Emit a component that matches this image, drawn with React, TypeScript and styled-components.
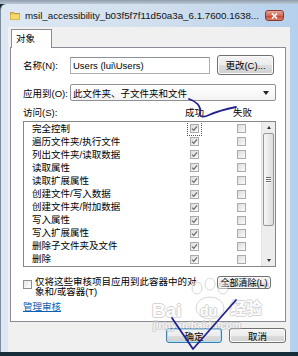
import styled, { createGlobalStyle } from "styled-components";

const GlobalStyle = createGlobalStyle`
  html, body {
    margin: 0;
    padding: 0;
    background: #172c39;
    overflow: hidden;
  }
  #root {
    width: 298px;
    height: 356px;
  }
`;

const Screen = styled.div`
  position: relative;
  width: 298px;
  height: 356px;
  display: flex;
  flex-direction: column;
  font-family: "Liberation Sans", "Noto Sans CJK SC", sans-serif;
  font-size: 9.5px;
  color: #000;
`;

const Backdrop = styled.div`
  height: 4px;
  background: linear-gradient(#8e9cab, #bcc8d4);
`;

const Window = styled.div`
  height: 348px;
  box-sizing: border-box;
  display: flex;
  flex-direction: column;
  background: linear-gradient(90deg, #dde8f3 0%, #d0deed 55%, #b4d0ec 100%);
  border-left: 1px solid #7d8c9c;
  border-top-left-radius: 6px;
`;

const TitleBar = styled.div`
  height: 23px;
  display: flex;
  align-items: center;
  gap: 5px;
  padding: 0 14px 0 9px;
`;

const TitleText = styled.span`
  flex: 1;
  min-width: 0;
  white-space: nowrap;
  overflow: hidden;
  font-family: "Liberation Sans", sans-serif;
  font-size: 9.75px;
  color: #111;
`;

const CloseButton = styled.div`
  width: 19px;
  height: 11px;
  box-sizing: border-box;
  display: flex;
  align-items: center;
  justify-content: center;
  border: 1px solid #8a3a30;
  border-radius: 3px;
  background: linear-gradient(#e7a497 0%, #d46a58 50%, #c2452f 55%, #d9826d 100%);
`;

const Client = styled.div`
  flex: 1;
  display: flex;
  flex-direction: column;
  margin: 0 8px 0 7px;
  padding: 2px 4px 0 2px;
  background: #f0f0f0;
`;

const TabStrip = styled.div`
  display: flex;
  padding-left: 1px;
`;

const Tab = styled.div`
  position: relative;
  z-index: 1;
  width: 41px;
  height: 19px;
  box-sizing: border-box;
  margin-bottom: -1px;
  padding: 2px 0 0 4px;
  border: 1px solid #898c95;
  border-bottom: none;
  background: #fff;
  line-height: 14px;
`;

const Panel = styled.div`
  height: 275px;
  box-sizing: border-box;
  display: flex;
  flex-direction: column;
  padding: 7px 9px 0 12px;
  border: 1px solid #898c95;
  background: #fff;
`;

const FieldRow = styled.div<{ $top?: number }>`
  display: flex;
  align-items: center;
  margin-top: ${({ $top }) => $top ?? 0}px;
`;

const Label = styled.span`
  width: 47px;
  flex-shrink: 0;
  white-space: nowrap;
`;

const TextField = styled.div`
  width: 140px;
  height: 17px;
  box-sizing: border-box;
  padding-left: 2px;
  border: 1px solid #a9acb3;
  border-top-color: #8c9099;
  line-height: 15px;
  white-space: nowrap;
`;

const ButtonSlot = styled.div<{ $left?: number; $right?: number }>`
  margin-left: ${({ $left }) => ($left === undefined ? "auto" : `${$left}px`)};
  margin-right: ${({ $right }) => $right ?? 0}px;
`;

const PushButton = styled.div<{ $w: number; $h: number; $default?: boolean; $small?: boolean }>`
  width: ${({ $w }) => $w}px;
  height: ${({ $h }) => $h}px;
  box-sizing: border-box;
  display: flex;
  align-items: center;
  justify-content: center;
  white-space: nowrap;
  font-size: ${({ $small }) => ($small ? "9px" : "9.5px")};
  border: 1px solid ${({ $default }) => ($default ? "#3c7fb1" : "#707070")};
  border-radius: 3px;
  background: linear-gradient(#f3f3f3 0%, #ececec 50%, #dddddd 51%, #d0d0d0 100%);
  box-shadow: inset 0 0 0 1px ${({ $default }) => ($default ? "#aee0f7" : "#fbfbfb")};
`;

const Combo = styled.div`
  flex: 1;
  height: 17px;
  box-sizing: border-box;
  display: flex;
  align-items: center;
  padding: 0 6px 0 2px;
  border: 1px solid #8e9096;
  border-radius: 2px;
  background: linear-gradient(#ffffff, #f3f3f3);
`;

const ComboText = styled.span`
  flex: 1;
  white-space: nowrap;
`;

const DownTriangle = styled.span`
  width: 0;
  height: 0;
  border-left: 3px solid transparent;
  border-right: 3px solid transparent;
  border-top: 4px solid #222;
`;

const HeaderRow = styled.div`
  display: grid;
  grid-template-columns: 162px 48px 1fr;
  height: 12px;
  margin-top: 6px;
  line-height: 12px;
`;

const ListBox = styled.div`
  height: 146px;
  box-sizing: border-box;
  display: flex;
  margin-top: 2px;
  border: 1px solid #828790;
  background: #fff;
`;

const Rows = styled.div`
  flex: 1;
  overflow: hidden;
`;

const Row = styled.div`
  height: 13.1px;
  display: grid;
  grid-template-columns: 158px 47px 1fr;
  align-items: center;
  padding-left: 8px;
  line-height: 12px;
`;

const Check = styled.span<{ $focus?: boolean }>`
  width: 9px;
  height: 9px;
  box-sizing: border-box;
  display: flex;
  align-items: center;
  justify-content: center;
  border: 1px solid #ababab;
  background: linear-gradient(135deg, #dcdcdc, #fbfbfb);
  outline: ${({ $focus }) => ($focus ? "1px dotted #555" : "none")};
  outline-offset: 2px;
`;

const ScrollBar = styled.div`
  width: 13px;
  display: flex;
  flex-direction: column;
  background: #ededed;
  border-left: 1px solid #e2e2e2;
`;

const ScrollArrow = styled.div`
  height: 11px;
  display: flex;
  align-items: center;
  justify-content: center;
`;

const ArrowGlyph = styled.span<{ $up?: boolean }>`
  width: 0;
  height: 0;
  border-left: 2.5px solid transparent;
  border-right: 2.5px solid transparent;
  ${({ $up }) => ($up ? "border-bottom: 3px solid #333;" : "border-top: 3px solid #333;")}
`;

const Thumb = styled.div`
  height: 93px;
  box-sizing: border-box;
  margin: 0 1px;
  display: flex;
  flex-direction: column;
  align-items: center;
  justify-content: center;
  gap: 1px;
  border: 1px solid #979797;
  border-radius: 2px;
  background: linear-gradient(90deg, #f6f6f6, #dcdcdc);
`;

const Grip = styled.span`
  width: 5px;
  height: 1px;
  background: #6b6b6b;
  box-shadow: 0 1px 0 #fff;
`;

const Track = styled.div`
  flex: 1;
`;

const OptionRow = styled.div`
  display: flex;
  align-items: flex-start;
  margin-top: 9px;
`;

const OptionText = styled.div`
  width: 168px;
  margin: 1px 0 0 3px;
  line-height: 10px;
`;

const OptionCheck = styled(Check)`
  margin-top: 4px;
  flex-shrink: 0;
  border-color: #8f8f8f;
  background: linear-gradient(135deg, #e6e6e6, #ffffff);
`;

const Link = styled.span`
  margin-top: 5px;
  align-self: flex-start;
  line-height: 10px;
  color: #0a5fb5;
  text-decoration: underline;
`;

const ButtonRow = styled.div`
  display: flex;
  justify-content: flex-end;
  gap: 7px;
  margin-top: 6px;
`;

const BottomBand = styled.div`
  height: 4px;
  background: #172c39;
`;

const Watermark = styled.div`
  position: absolute;
  left: 150px;
  top: 278px;
  width: 120px;
  height: 54px;
  opacity: 0.45;
  pointer-events: none;
`;

const MarkWord = styled.span<{ $size: number }>`
  position: absolute;
  font-family: "Liberation Sans", "Noto Sans CJK SC", sans-serif;
  font-weight: bold;
  font-size: ${({ $size }) => $size}px;
  line-height: 1;
  color: #fff;
  text-shadow: -1px 0 #a0a0a0, 1px 0 #a0a0a0, 0 -1px #a0a0a0, 0 1px #a0a0a0;
  white-space: nowrap;
`;

const Scribble = styled.svg`
  position: absolute;
  left: 0;
  top: 0;
  pointer-events: none;
`;

const rows = [
  "完全控制",
  "遍历文件夹/执行文件",
  "列出文件夹/读取数据",
  "读取属性",
  "读取扩展属性",
  "创建文件/写入数据",
  "创建文件夹/附加数据",
  "写入属性",
  "写入扩展属性",
  "删除子文件夹及文件",
  "删除",
];

function Tick() {
  return (
    <svg width="7" height="7" viewBox="0 0 7 7">
      <path d="M1 3.6 L2.8 5.4 L6 1.4" fill="none" stroke="#6a6a6a" strokeWidth="1.3" />
    </svg>
  );
}

function FolderIcon() {
  return (
    <svg width="10" height="9" viewBox="0 0 10 9">
      <path d="M0.5 1.5 h3 l1 1 h5 v6 h-9 z" fill="#e8c24a" stroke="#b08a20" strokeWidth="0.8" />
      <path d="M0.5 3.5 h9 v5 h-9 z" fill="#f6d96b" />
    </svg>
  );
}

export default function App() {
  return (
    <Screen>
      <GlobalStyle />
      <Backdrop />
      <Window>
        <TitleBar>
          <FolderIcon />
          <TitleText>msil_accessibility_b03f5f7f11d50a3a_6.1.7600.1638...</TitleText>
          <CloseButton>
            <svg width="7" height="6" viewBox="0 0 7 6">
              <path d="M1 0.5 L6 5.5 M6 0.5 L1 5.5" stroke="#fff" strokeWidth="1.6" />
            </svg>
          </CloseButton>
        </TitleBar>
        <Client>
          <TabStrip>
            <Tab>对象</Tab>
          </TabStrip>
          <Panel>
            <FieldRow>
              <Label>名称(N):</Label>
              <TextField>Users (lui\Users)</TextField>
              <ButtonSlot $left={7}>
                <PushButton $w={57} $h={20}>更改(C)...</PushButton>
              </ButtonSlot>
            </FieldRow>
            <FieldRow $top={9}>
              <Label>应用到(O):</Label>
              <Combo>
                <ComboText>此文件夹、子文件夹和文件</ComboText>
                <DownTriangle />
              </Combo>
            </FieldRow>
            <HeaderRow>
              <span>访问(S):</span>
              <span>成功</span>
              <span>失败</span>
            </HeaderRow>
            <ListBox>
              <Rows>
                {rows.map((name, i) => (
                  <Row key={name}>
                    <span>{name}</span>
                    <Check $focus={i === 0}>
                      <Tick />
                    </Check>
                    <Check />
                  </Row>
                ))}
              </Rows>
              <ScrollBar>
                <ScrollArrow>
                  <ArrowGlyph $up />
                </ScrollArrow>
                <Thumb>
                  <Grip />
                  <Grip />
                  <Grip />
                </Thumb>
                <Track />
                <ScrollArrow>
                  <ArrowGlyph />
                </ScrollArrow>
              </ScrollBar>
            </ListBox>
            <OptionRow>
              <OptionCheck />
              <OptionText>仅将这些审核项目应用到此容器中的对象和/或容器(T)</OptionText>
              <ButtonSlot $right={5}>
                <PushButton $w={54} $h={13} $small>全部清除(L)</PushButton>
              </ButtonSlot>
            </OptionRow>
            <Link>管理审核</Link>
          </Panel>
          <ButtonRow>
            <PushButton $w={56} $h={15} $default>确定</PushButton>
            <PushButton $w={57} $h={15}>取消</PushButton>
          </ButtonRow>
        </Client>
      </Window>
      <BottomBand />
      <Watermark>
        <svg width="120" height="54" viewBox="0 0 120 54" style={{ position: "absolute", left: 0, top: 0 }}>
          <g fill="#fff" stroke="#a8a8a8" strokeWidth="1">
            <ellipse cx="47" cy="10" rx="5" ry="6" />
            <ellipse cx="60" cy="6" rx="5" ry="6" />
            <ellipse cx="73" cy="10" rx="5" ry="6" />
            <ellipse cx="60" cy="30" rx="14" ry="11" />
          </g>
        </svg>
        <MarkWord $size={19} style={{ left: 2, top: 23 }}>Bai</MarkWord>
        <MarkWord $size={14} style={{ left: 50, top: 26 }}>du</MarkWord>
        <MarkWord $size={16} style={{ left: 80, top: 23 }}>经验</MarkWord>
        <MarkWord $size={10} style={{ left: 3, top: 43 }}>jingyan.baidu.com</MarkWord>
      </Watermark>
      <Scribble width="298" height="356" viewBox="0 0 298 356">
        <g fill="none" stroke="#23238f" strokeWidth="1.8" strokeLinecap="round" strokeLinejoin="round">
          <path d="M189 99 C196 101 201 106 200 112 C199 117 203 118 209 115 C218 111 226 109 236 107" />
          <path d="M172 318 L193 349 L236 300" />
        </g>
      </Scribble>
    </Screen>
  );
}
